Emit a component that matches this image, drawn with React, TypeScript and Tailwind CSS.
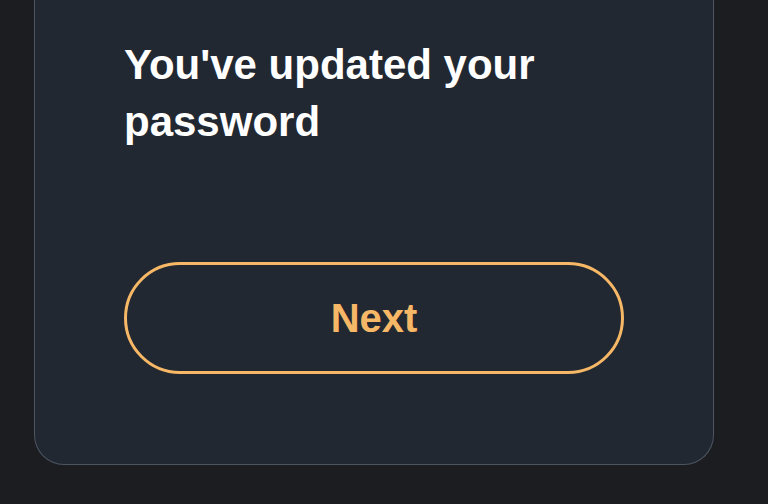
import React from 'react';

export default function App() {
  return (
    <div className="h-[504px] w-[768px] overflow-hidden bg-[#1b1d21] pl-[34px] font-['Liberation_Sans',Arial,sans-serif]">
      {/* Card, top edge runs off screen */}
      <div className="h-[465px] w-[680px] rounded-b-[30px] border border-t-0 border-[#4d5562] bg-[#222831] pl-[89px] pt-[36px]">
        <h1 className="text-[42px] font-bold leading-[57px] text-white">
          You've updated your
          <br />
          password
        </h1>
        <button
          type="button"
          className="mt-[112px] flex h-[112px] w-[500px] items-center justify-center rounded-full border-[3px] border-[#f6b866] text-[40px] font-bold text-[#f6b866]"
        >
          Next
        </button>
      </div>
    </div>
  );
}
